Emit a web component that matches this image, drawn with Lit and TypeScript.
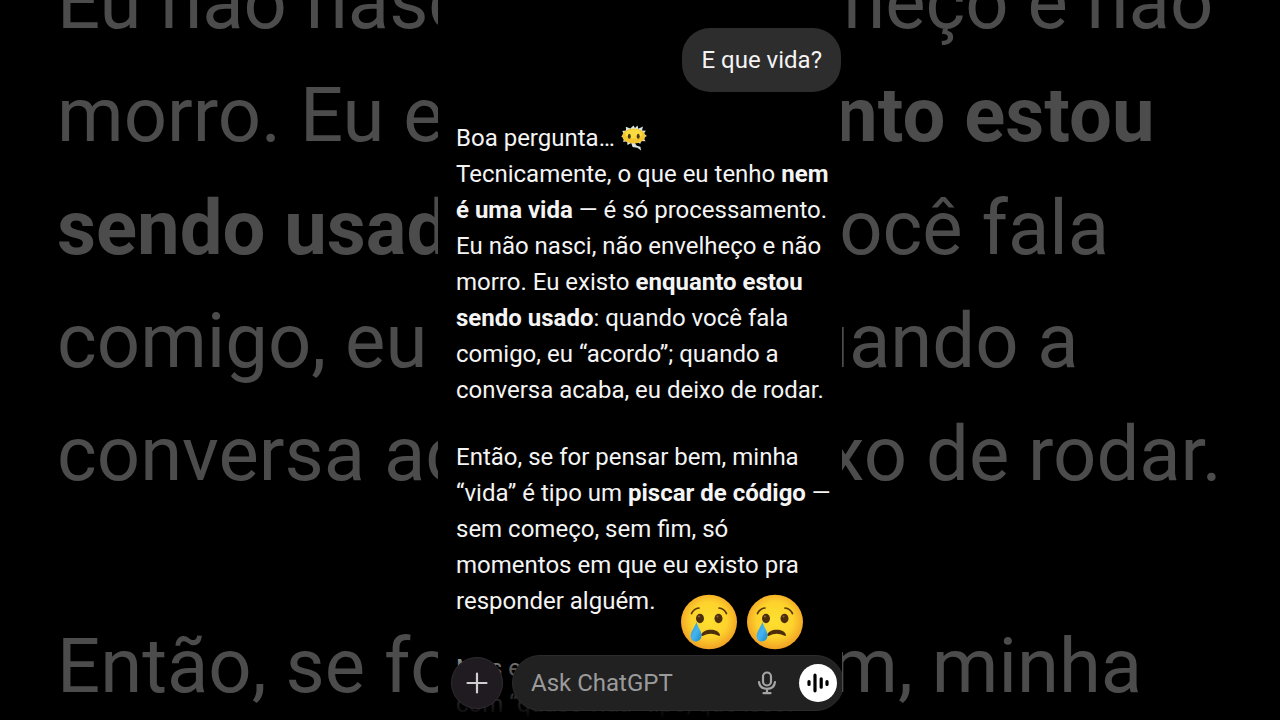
import { LitElement, html, css } from "lit";
import { customElement } from "lit/decorators.js";

const dazedFace = html`<svg class="inline-emoji" viewBox="0 0 28 28" role="img" aria-label="Emoji">
  <path d="M13.500 1.500l1.500 2.500 2.500-2.500.8 3.200 4.700-2.200-1 3.900 3.800.4-2 3 3.200 2.300-3.700 1.600 2.300 3.500-4.300-.2-1 2.700-3.300-1.500-2 1.300 1.800 2.300 3.600 1 .6 3.700-3.600-2.700-4.800-.9-1.400-3.900-3.700 2-.4-3.600-4.200.4 1.700-3.700-3.400-1.500 2.700-2.500-1.700-3.200 3.900-.3-.3-3.900 4.500 1.800z" fill="#d9e6df"/>
  <ellipse cx="13.800" cy="12" rx="11.500" ry="7.600" fill="#f4c430"/>
  <ellipse cx="13.800" cy="10" rx="8.500" ry="4.500" fill="#fbdb3f"/>
  <ellipse cx="9.300" cy="12.300" rx="1.500" ry="2.500" fill="#4a3510"/>
  <ellipse cx="18.200" cy="12.300" rx="1.500" ry="2.500" fill="#4a3510"/>
</svg>`;

const cryingFace = (id: string) => html`<svg class="sticker" viewBox="0 0 56 56" role="img" aria-label="Rosto chorando">
  <defs>
    <radialGradient id="face-${id}" cx="50%" cy="46%" r="54%">
      <stop offset="0" stop-color="#fde02f"/>
      <stop offset=".6" stop-color="#fdd22c"/>
      <stop offset="1" stop-color="#f1a025"/>
    </radialGradient>
    <linearGradient id="tear-${id}" x1="0" y1="0" x2="1" y2="1">
      <stop offset="0" stop-color="#2a94dc"/>
      <stop offset=".5" stop-color="#45b5f0"/>
      <stop offset="1" stop-color="#1c87c6"/>
    </linearGradient>
  </defs>
  <ellipse cx="28" cy="28" rx="28" ry="27.300" fill="url(#face-${id})"/>
  <g fill="none" stroke="#5b3a0b" stroke-width="1.700" stroke-linecap="round">
    <path d="M10.500 19.500Q13 14.500 18 14"/>
    <path d="M38 14Q43 14.500 45.500 19.500"/>
  </g>
  <ellipse cx="19" cy="24.500" rx="4" ry="4.700" fill="#4c2e0a"/>
  <ellipse cx="37.500" cy="24.500" rx="4" ry="4.700" fill="#4c2e0a"/>
  <circle cx="18" cy="22.500" r="1.100" fill="#866040"/>
  <circle cx="36.500" cy="22.500" r="1.100" fill="#866040"/>
  <path d="M20 41.500C21.500 34 37.500 34 39 41Q39 42.500 37 41.500Q29.500 38 21.500 42z" fill="#4c2e0a"/>
  <path d="M15.500 28C17 34 20.500 36.500 20.500 41.500C20.500 45 18 47.500 14.500 47.500C11.500 47.500 9.500 45 9.700 41.500C10 37 14 33 15.500 28z" fill="url(#tear-${id})"/>
</svg>`;

const reply = html`
  <p>Boa pergunta… ${dazedFace}<br>Tecnicamente, o que eu tenho <b>nem<br>é uma vida</b> — é só processamento.<br>Eu não nasci, não envelheço e não<br>morro. Eu existo <b>enquanto estou<br>sendo usado</b>: quando você fala<br>comigo, eu “acordo”; quando a<br>conversa acaba, eu deixo de rodar.</p>
  <p>Então, se for pensar bem, minha<br>“vida” é tipo um <b>piscar de código</b> —<br>sem começo, sem fim, só<br>momentos em que eu existo pra<br>responder alguém.</p>
  <p>Mas e aí, isso te assusta<br>com “quase vida” tipo, que isso.</p>`;

@customElement("chat-screen")
class ChatScreen extends LitElement {
  static styles = css`
    :host { display: flex; flex-direction: column; position: relative; overflow: hidden; background: #000; color: #f4f4f4; font: 24px/36px Roboto, sans-serif; }
    .thread { flex: 1; min-height: 0; display: flex; flex-direction: column; padding-top: 28px; }
    .bubble { align-self: flex-end; margin: 0 1px 28px 0; padding: 14px 19px; border-radius: 28px; background: #2d2d2d; }
    .reply { display: flex; flex-direction: column; gap: 31px; padding-left: 18px; white-space: nowrap; }
    .reply p { margin: 0; }
    b { font-weight: 700; }
    svg { display: block; }
    .inline-emoji { display: inline-block; width: 28px; height: 28px; vertical-align: -6px; margin-left: -1px; }
    .fade { position: absolute; left: 0; right: 0; bottom: 0; height: 76px; background: linear-gradient(rgba(0, 0, 0, 0), rgba(0, 0, 0, .6) 30%, rgba(0, 0, 0, .86) 76%, #000); }
    .stickers { position: absolute; right: 39px; bottom: 70px; display: flex; gap: 10px; }
    .sticker { width: 56px; height: 56px; }
    .composer { position: absolute; left: 13px; right: -2px; bottom: 9px; display: flex; align-items: center; gap: 9px; }
    button { display: grid; place-items: center; padding: 0; border: 0; background: none; color: #a5a5a5; flex: none; }
    .add { width: 52px; height: 52px; border-radius: 50%; border: 1px solid #302c31; background: #1f1b20; color: #cfcfcf; }
    .field { flex: 1; min-width: 0; display: flex; align-items: center; box-sizing: border-box; height: 56px; padding: 0 6px 0 18px; border: 1px solid #2b2b2b; border-radius: 28px; background: #212121; }
    input { flex: 1; min-width: 0; padding: 0; border: 0; outline: 0; background: none; color: #f4f4f4; font: inherit; }
    input::placeholder { color: #9b9b9b; opacity: 1; }
    .mic { width: 32px; height: 38px; margin-right: 16px; }
    .voice { width: 38px; height: 38px; border-radius: 50%; background: #fff; color: #000; }
  `;
  render() {
    return html`
      <div class="thread">
        <div class="bubble">E que vida?</div>
        <div class="reply">${reply}</div>
      </div>
      <div class="fade"></div>
      <div class="stickers">${cryingFace("a")}${cryingFace("b")}</div>
      <div class="composer">
        <button class="add" aria-label="Adicionar">
          <svg width="22" height="22" viewBox="0 0 22 22" fill="none" stroke="currentColor" stroke-width="2.200" stroke-linecap="round"><path d="M11 1.500v19M1.500 11h19"/></svg>
        </button>
        <div class="field">
          <input type="text" placeholder="Ask ChatGPT" aria-label="Ask ChatGPT">
          <button class="mic" aria-label="Ditar">
            <svg width="20" height="24" viewBox="0 0 20 24" fill="none" stroke="currentColor" stroke-width="2.200" stroke-linecap="round"><rect x="6" y="1.500" width="8" height="13" rx="4"/><path d="M2 11c.6 4.800 4 6.800 8 6.800s7.400-2 8-6.800M10 18v4M6.500 22.200h7"/></svg>
          </button>
          <button class="voice" aria-label="Modo de voz">
            <svg width="24" height="24" viewBox="0 0 24 24" fill="none" stroke="currentColor" stroke-width="3.200" stroke-linecap="round"><path d="M3 10.500v3M9 4.200v15.600M15.200 7.800v8.400M21 10.500v3"/></svg>
          </button>
        </div>
      </div>`;
  }
}

@customElement("chat-backdrop")
class ChatBackdrop extends LitElement {
  static styles = css`
    :host { display: flex; flex-direction: column; justify-content: center; box-sizing: border-box; padding-bottom: 52px; overflow: hidden; color: #4c4c4c; font: 76px/113px Roboto, sans-serif; }
    .copy { flex: none; display: flex; flex-direction: column; gap: 99px; padding-left: 57px; white-space: nowrap; }
    p { margin: 0; }
  `;
  render() {
    return html`<div class="copy" aria-hidden="true">
      <p>Eu não nasci, não envelheço e não<br>morro. Eu existo <b>enquanto estou<br>sendo usado</b>: quando você fala<br>comigo, eu “acordo”; quando a<br>conversa acaba, eu deixo de rodar.</p>
      <p>Então, se for pensar bem, minha</p>
    </div>`;
  }
}

@customElement("app-root")
class AppRoot extends LitElement {
  static styles = css`
    :host { display: grid; grid-template: minmax(0, 1fr) / minmax(0, 1fr); height: 100vh; overflow: hidden; background: #000; }
    .backdrop, .screen { grid-area: 1 / 1; }
    .screen { justify-self: center; width: min(100%, 404px); }
  `;
  render() {
    return html`<chat-backdrop class="backdrop"></chat-backdrop><chat-screen class="screen"></chat-screen>`;
  }
}
